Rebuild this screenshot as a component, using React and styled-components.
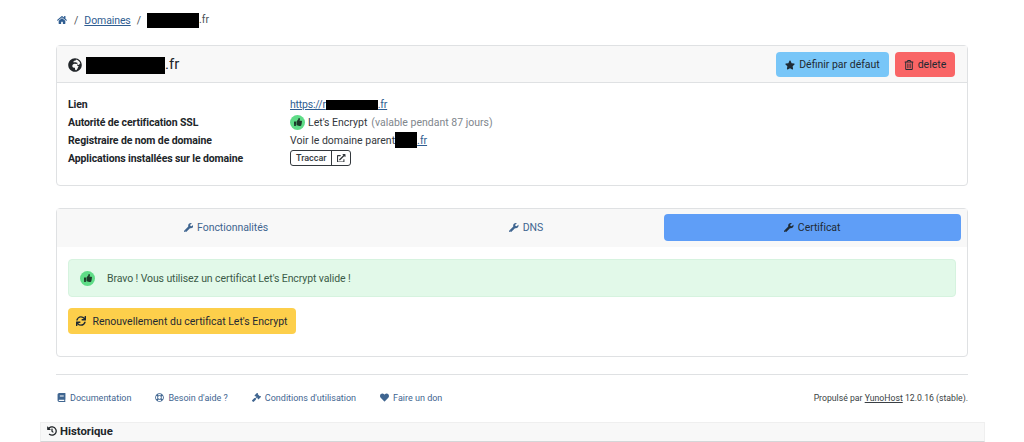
import React from 'react';
import styled, { createGlobalStyle } from 'styled-components';
import {
  FaHome, FaStar, FaRegTrashAlt, FaThumbsUp, FaExternalLinkAlt, FaWrench, FaSync,
  FaBook, FaRegLifeRing, FaGavel, FaHeart, FaHistory, FaGlobeAfrica,
} from 'react-icons/fa';

const GlobalStyle = createGlobalStyle`
  html, body { margin: 0; padding: 0; background: #fff; height: 442px; overflow: hidden; }
  body { font-family: Roboto, "Noto Sans", sans-serif; font-size: 10.5px; color: #2e3338; }
  svg { flex: none; }
`;

const Page = styled.div`
  display: flex;
  flex-direction: column;
  height: 442px;
`;

const Main = styled.main`
  padding: 0 56px;
  display: flex;
  flex-direction: column;
`;

const TextLink = styled.a`
  color: #2f5d91;
  text-decoration: underline;
  letter-spacing: ${p => p.$tight || 0}px;
`;

const Redacted = styled.span`
  display: inline-block;
  background: #000;
  width: ${p => p.$w}px;
  height: ${p => p.$h}px;
  vertical-align: middle;
`;

const Breadcrumb = styled.nav`
  height: 40px;
  margin-bottom: 5px;
  display: flex;
  align-items: center;
  gap: 5px;
  padding-left: 1px;
  color: #4a5057;
`;

const Sep = styled.span`
  margin: 0 1px;
`;

const HomeIcon = styled(FaHome)`
  color: #2f5d91;
  font-size: 10px;
  margin-right: 1px;
`;

const Card = styled.section`
  border: 1px solid #dfe1e3;
  border-radius: 4px;
  display: flex;
  flex-direction: column;
  height: ${p => p.$h}px;
  box-sizing: border-box;
  margin-bottom: ${p => p.$mb || 0}px;
`;

const CardHeader = styled.header`
  height: 37px;
  box-sizing: border-box;
  background: #f8f8f8;
  border-bottom: 1px solid #dfe1e3;
  display: flex;
  align-items: center;
  justify-content: space-between;
  padding: 1px 12px 0 11px;
`;

const Title = styled.h1`
  margin: 0;
  font-size: 15px;
  font-weight: 400;
  color: #212529;
  display: flex;
  align-items: center;
  gap: 4px;
  svg { font-size: 14px; }
`;

const Actions = styled.div`
  display: flex;
  gap: 6px;
`;

const Button = styled.button`
  display: inline-flex;
  align-items: center;
  justify-content: center;
  gap: ${p => p.$gap || 4}px;
  height: ${p => p.$h || 25}px;
  width: ${p => p.$w}px;
  padding: 0;
  border: none;
  border-radius: 4px;
  background: ${p => p.$bg};
  color: #1f2a33;
  font: inherit;
  svg { font-size: 10px; }
`;

const InfoBody = styled.dl`
  margin: 0;
  padding: 12px 11px;
  display: grid;
  grid-template-columns: 222px 1fr;
  grid-auto-rows: 18px;
  align-items: center;
`;

const Label = styled.dt`
  font-weight: 700;
  color: #212529;
  letter-spacing: -0.11px;
`;

const Value = styled.dd`
  margin: 0;
  display: flex;
  align-items: center;
  color: #33383d;
`;

const Muted = styled.span`
  color: #80868c;
  margin-left: 4px;
`;

const ThumbBadge = styled.span`
  width: ${p => p.$size}px;
  height: ${p => p.$size}px;
  border-radius: 50%;
  background: #5fdc87;
  display: inline-flex;
  align-items: center;
  justify-content: center;
  margin-right: ${p => p.$gap}px;
  color: #1d3b2a;
  svg { font-size: 8px; }
`;

const AppButton = styled.span`
  display: inline-flex;
  height: 14px;
  border: 1px solid #33383d;
  border-radius: 3px;
  align-items: center;
  font-size: 9px;
  font-weight: 500;
`;

const AppName = styled.span`
  padding: 0 5px;
  line-height: 14px;
`;

const AppIcon = styled.span`
  border-left: 1px solid #33383d;
  height: 14px;
  padding: 0 4px 0 5px;
  display: flex;
  align-items: center;
  svg { font-size: 8.5px; }
`;

const TabsBar = styled.div`
  height: 38px;
  box-sizing: border-box;
  background: #f8f8f8;
  padding: 5px 6px 6px;
  display: flex;
`;

const Tab = styled.div`
  flex: 1 1 auto;
  display: flex;
  align-items: center;
  justify-content: center;
  gap: 4px;
  border-radius: 4px;
  letter-spacing: -0.05px;
  background: ${p => (p.$active ? '#5f9ef7' : 'transparent')};
  color: ${p => (p.$active ? '#1f2a33' : '#3f6590')};
  svg { font-size: 9.5px; }
`;

const TabBody = styled.div`
  padding: 12px 11px;
  display: flex;
  flex-direction: column;
  gap: 11px;
  align-items: flex-start;
`;

const Alert = styled.div`
  align-self: stretch;
  height: 38px;
  box-sizing: border-box;
  background: #e2f9e9;
  border: 1px solid #d6f3df;
  border-radius: 4px;
  display: flex;
  align-items: center;
  padding-left: 11px;
  color: #3b5b48;
  letter-spacing: -0.1px;
`;

const Divider = styled.hr`
  margin: 17px 0 0;
  border: none;
  border-top: 1px solid #dfe1e3;
`;

const Footer = styled.footer`
  height: 47px;
  padding-bottom: 2px;
  box-sizing: border-box;
  display: flex;
  align-items: center;
  justify-content: space-between;
  font-size: 9px;
`;

const FooterLinks = styled.div`
  display: flex;
  gap: 24px;
  padding-left: 1px;
`;

const FooterLink = styled.span`
  display: inline-flex;
  align-items: center;
  gap: 4px;
  color: #3f6590;
  svg { font-size: 9px; }
`;

const Powered = styled.div`
  color: #3a3f44;
  font-size: 8.7px;
  a { color: #3a3f44; text-decoration: underline; }
`;

const History = styled.div`
  margin: 0 39px 0 40px;
  height: 20px;
  box-sizing: border-box;
  background: #f8f8f8;
  border: 1px solid #efefef;
  border-bottom-color: #d4d6d8;
  display: flex;
  align-items: center;
  gap: 3px;
  padding: 0 0 2px 6px;
  font-size: 11.3px;
  font-weight: 700;
  color: #212529;
  svg { font-size: 10px; }
`;

const infoRows = [
  ['Lien', <TextLink key="l" $tight={-0.2}>https://r<Redacted $w={52} $h={10} />.fr</TextLink>],
  ['Autorité de certification SSL', (
    <>
      <ThumbBadge $size={15} $gap={3}><FaThumbsUp /></ThumbBadge>
      Let's Encrypt <Muted>(valable pendant 87 jours)</Muted>
    </>
  )],
  ['Registraire de nom de domaine', (
    <>
      Voir le domaine parent<Redacted $w={22} $h={16} /><TextLink>.fr</TextLink>
    </>
  )],
  ['Applications installées sur le domaine', (
    <AppButton>
      <AppName>Traccar</AppName>
      <AppIcon><FaExternalLinkAlt /></AppIcon>
    </AppButton>
  )],
];

const tabs = ['Fonctionnalités', 'DNS', 'Certificat'];

const footerLinks = [
  [FaBook, 'Documentation'],
  [FaRegLifeRing, "Besoin d'aide ?"],
  [FaGavel, "Conditions d'utilisation"],
  [FaHeart, 'Faire un don'],
];

export default function App() {
  return (
    <Page>
      <GlobalStyle />
      <Main>
        <Breadcrumb>
          <HomeIcon />
          <Sep>/</Sep>
          <TextLink $tight={-0.1}>Domaines</TextLink>
          <Sep>/</Sep>
          <span><Redacted $w={52} $h={15} />.fr</span>
        </Breadcrumb>

        <Card $h={141} $mb={22}>
          <CardHeader>
            <Title>
              <FaGlobeAfrica />
              <span><Redacted $w={79} $h={17} />.fr</span>
            </Title>
            <Actions>
              <Button $w={113} $bg="#78c6f8"><FaStar />Définir par défaut</Button>
              <Button $w={60} $bg="#f96566"><FaRegTrashAlt />delete</Button>
            </Actions>
          </CardHeader>
          <InfoBody>
            {infoRows.map(([label, value]) => (
              <React.Fragment key={label}>
                <Label>{label}</Label>
                <Value>{value}</Value>
              </React.Fragment>
            ))}
          </InfoBody>
        </Card>

        <Card $h={149}>
          <TabsBar>
            {tabs.map(t => (
              <Tab key={t} $active={t === 'Certificat'}><FaWrench />{t}</Tab>
            ))}
          </TabsBar>
          <TabBody>
            <Alert>
              <ThumbBadge $size={15} $gap={12}><FaThumbsUp /></ThumbBadge>
              Bravo ! Vous utilisez un certificat Let's Encrypt valide !
            </Alert>
            <Button $w={228} $h={26} $gap={6} $bg="#fdcf4b"><FaSync />Renouvellement du certificat Let's Encrypt</Button>
          </TabBody>
        </Card>

        <Divider />
        <Footer>
          <FooterLinks>
            {footerLinks.map(([Icon, text]) => (
              <FooterLink key={text}><Icon />{text}</FooterLink>
            ))}
          </FooterLinks>
          <Powered>Propulsé par <a>YunoHost</a> 12.0.16 (stable).</Powered>
        </Footer>
      </Main>
      <History><FaHistory />Historique</History>
    </Page>
  );
}
